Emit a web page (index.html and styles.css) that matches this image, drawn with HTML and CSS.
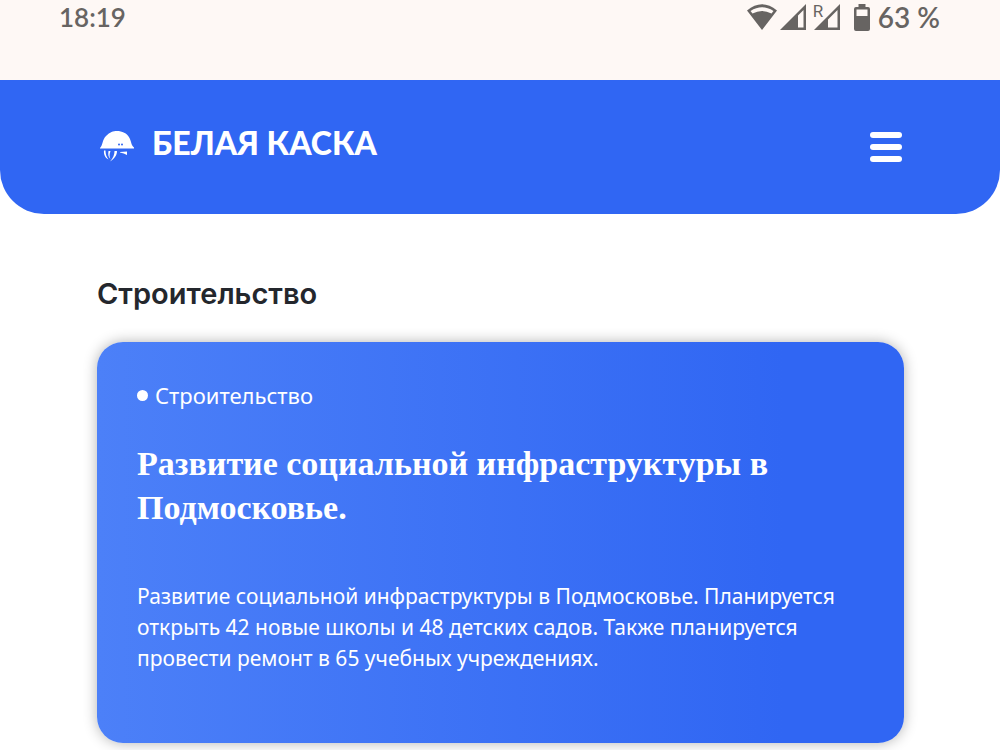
FILE: index.html
```
<!DOCTYPE html>
<html lang="ru">
<head>
  <meta charset="UTF-8">
  <meta name="viewport" content="width=device-width, initial-scale=1.0">
  <title>Белая Каска</title>
  <link rel="stylesheet" href="styles.css">
</head>
<body>

  <!-- Status bar -->
  <div class="status-bar">
    <span class="time">18:19</span>
    <div class="status-icons">
      <svg class="wifi" width="30" height="26" viewBox="0 0 30 26">
        <path fill-rule="evenodd" d="M0 6.500Q15-6 30 6.500L15 26ZM3.500 7L5.500 9.500Q15 4.500 24.500 9.500L26.500 7Q15-.5 3.500 7Z"/>
      </svg>
      <svg class="signal" width="26" height="26" viewBox="0 0 26 26">
        <path fill-rule="evenodd" d="M26 0V26H0ZM23.500 6L18 11.500V23.500H23.500Z"/>
      </svg>
      <div class="roaming">
        <span class="roaming-label">R</span>
        <svg width="26" height="26" viewBox="0 0 26 26">
          <path fill-rule="evenodd" d="M26 0V26H0ZM23.500 6L14 15.500V23.500H23.500Z"/>
        </svg>
      </div>
      <svg class="battery" width="16" height="27" viewBox="0 0 16 27">
        <path fill-rule="evenodd" d="M4.500 0H11.500V3H14Q16 3 16 5V25Q16 27 14 27H2Q0 27 0 25V5Q0 3 2 3H4.500ZM2.500 5.500V12H13.500V5.500Z"/>
      </svg>
      <span class="percent">63 %</span>
    </div>
  </div>

  <!-- Header -->
  <header class="header">
    <a class="logo" href="#">
      <svg width="34" height="32" viewBox="0 0 34 32">
        <path d="M0 17C3 14 2 9 6 5C10 1 13 0 17 0C22 0 27 2 29.500 7C31.500 11 31 14 34 16.500V17.500H0Z"/>
        <path d="M4 19.500H5.500C5.500 23 6.500 26 8.500 28.500C5 27 3.500 23 4 19.500ZM8.500 20H10.500C9 24 9.500 26 10.500 28C8 26 8 23 8.500 20ZM14.500 20H17C17 24.500 14 28 10 30.500C13 27 14.500 24 14.500 20ZM20 21L27 20.500V24Q24 22 20 21.500Z"/>
        <circle class="dot" cx="19" cy="13.500" r="1"/>
        <circle class="dot" cx="22" cy="13.500" r="1"/>
      </svg>
      <span>БЕЛАЯ КАСКА</span>
    </a>
    <button class="menu-button" aria-label="Меню">
      <span></span>
      <span></span>
      <span></span>
    </button>
  </header>

  <!-- News section -->
  <main class="content">
    <h1 class="section-title">Строительство</h1>
    <article class="card">
      <div class="category">Строительство</div>
      <h2 class="card-title">Развитие социальной инфраструктуры в Подмосковье.</h2>
      <p class="card-text">Развитие социальной инфраструктуры в Подмосковье. Планируется открыть 42 новые школы и 48 детских садов. Также планируется провести ремонт в 65 учебных учреждениях.</p>
    </article>
  </main>

</body>
</html>
```
FILE: styles.css
```
* {
  box-sizing: border-box;
}

body {
  margin: 0;
  background: #fff;
  font-family: "Noto Sans", sans-serif;
  overflow: hidden;
}

/* Status bar */
.status-bar {
  display: flex;
  justify-content: space-between;
  height: 80px;
  padding: 0 60px 0 59px;
  background: #fef8f5;
  color: #676462;
  font-family: Lato, sans-serif;
  font-size: 28px;
  font-weight: 600;
  line-height: 34px;
}

.time {
  font-size: 26px;
}

.status-icons {
  display: flex;
  align-items: center;
  height: 34px;
  fill: #676462;
}

.signal {
  margin-left: 3px;
}

.roaming {
  position: relative;
  display: flex;
  margin-left: 8px;
}

.roaming-label {
  position: absolute;
  top: -1px;
  left: -1px;
  font-family: Roboto, sans-serif;
  font-size: 17px;
  font-weight: 400;
  line-height: 16px;
}

.battery {
  margin-left: 14px;
}

.percent {
  margin-left: 8px;
}

/* Header */
.header {
  display: flex;
  justify-content: space-between;
  align-items: center;
  height: 134px;
  padding: 0 98px 0 100px;
  border-radius: 0 0 44px 44px;
  background: #3066f3;
}

.logo {
  display: flex;
  align-items: flex-start;
  gap: 18px;
  color: #fff;
  font-family: Lato, sans-serif;
  font-size: 32px;
  font-weight: 900;
  line-height: 24px;
  text-decoration: none;
  fill: #fff;
}

.logo .dot {
  fill: #3066f3;
}

.menu-button {
  display: flex;
  flex-direction: column;
  gap: 6px;
  padding: 0;
  border: none;
  background: none;
  cursor: pointer;
}

.menu-button span {
  width: 32px;
  height: 6px;
  border-radius: 3px;
  background: #fff;
}

/* News section */
.content {
  padding: 60px 96px 7px 97px;
}

.section-title {
  margin: 0 0 28px;
  color: #24272d;
  font-family: Inter, sans-serif;
  font-size: 29px;
  font-weight: 600;
  line-height: 40px;
}

.card {
  padding: 38px 40px 69px;
  border-radius: 26px;
  background: linear-gradient(90deg, #4c80f8, #3066f3 85%);
  box-shadow: 0 0 14px rgba(0, 0, 0, 0.3);
  color: #fff;
}

.category {
  display: flex;
  align-items: center;
  gap: 7px;
  font-size: 22px;
  line-height: 30px;
}

.category::before {
  content: "";
  width: 11px;
  height: 11px;
  border-radius: 50%;
  background: #fff;
}

.card-title {
  margin: 32px 0 51px;
  font-family: "Liberation Serif", serif;
  font-size: 34px;
  font-weight: 700;
  line-height: 44px;
}

.card-text {
  margin: 0;
  font-size: 21px;
  line-height: 31px;
}
```
